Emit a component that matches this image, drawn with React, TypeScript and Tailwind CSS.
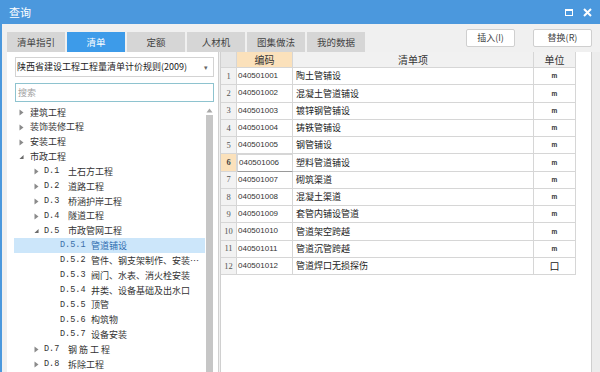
import React from "react";

const tabs = ["清单指引", "清单", "定额", "人材机", "图集做法", "我的数据"];

type TreeItem = {
  level: number;
  arrow: "none" | "right" | "down";
  code?: string;
  title: string;
  selected?: boolean;
};

const tree: TreeItem[] = [
  { level: 0, arrow: "right", title: "建筑工程" },
  { level: 0, arrow: "right", title: "装饰装修工程" },
  { level: 0, arrow: "right", title: "安装工程" },
  { level: 0, arrow: "down", title: "市政工程" },
  { level: 1, arrow: "right", code: "D.1", title: "土石方工程" },
  { level: 1, arrow: "right", code: "D.2", title: "道路工程" },
  { level: 1, arrow: "right", code: "D.3", title: "桥涵护岸工程" },
  { level: 1, arrow: "right", code: "D.4", title: "隧道工程" },
  { level: 1, arrow: "down", code: "D.5", title: "市政管网工程" },
  { level: 2, arrow: "none", code: "D.5.1", title: "管道铺设", selected: true },
  { level: 2, arrow: "none", code: "D.5.2", title: "管件、钢支架制作、安装…" },
  { level: 2, arrow: "none", code: "D.5.3", title: "阀门、水表、消火栓安装" },
  { level: 2, arrow: "none", code: "D.5.4", title: "井类、设备基础及出水口" },
  { level: 2, arrow: "none", code: "D.5.5", title: "顶管" },
  { level: 2, arrow: "none", code: "D.5.6", title: "构筑物" },
  { level: 2, arrow: "none", code: "D.5.7", title: "设备安装" },
  { level: 1, arrow: "right", code: "D.7", title: "钢 筋 工 程" },
  { level: 1, arrow: "right", code: "D.8", title: "拆除工程" },
];

const rows = [
  ["040501001", "陶土管铺设", "m"],
  ["040501002", "混凝土管道铺设", "m"],
  ["040501003", "镀锌钢管铺设", "m"],
  ["040501004", "铸铁管铺设", "m"],
  ["040501005", "钢管铺设", "m"],
  ["040501006", "塑料管道铺设", "m"],
  ["040501007", "砌筑渠道", "m"],
  ["040501008", "混凝土渠道", "m"],
  ["040501009", "套管内铺设管道", "m"],
  ["040501010", "管道架空跨越", "m"],
  ["040501011", "管道沉管跨越", "m"],
  ["040501012", "管道焊口无损探伤", "口"],
];

function Arrow({ kind }: { kind: "none" | "right" | "down" }) {
  if (kind === "right")
    return (
      <svg width="5" height="7" viewBox="0 0 5 7" className="block">
        <path d="M0.5 0.5 L4.5 3.5 L0.5 6.5 Z" fill="#8a8a8a" />
      </svg>
    );
  if (kind === "down")
    return (
      <svg width="6" height="6" viewBox="0 0 6 6" className="block">
        <path d="M5.5 0.5 L5.5 5.5 L0.5 5.5 Z" fill="#6a6a6a" />
      </svg>
    );
  return null;
}

function TreeRow({ item }: { item: TreeItem }) {
  const arrowLeft = item.level === 0 ? 5 : item.level === 1 ? 20 : 36;
  return (
    <div
      className={
        "h-[15px] flex items-center relative whitespace-nowrap " +
        (item.selected ? "bg-[#cce6fa]" : "")
      }
    >
      {item.level === 0 && (
        <>
          <span className="w-[5px] ml-[5px] flex items-center">
            <Arrow kind={item.arrow} />
          </span>
          <span className="ml-[6px] text-[9px] text-[#333]">{item.title}</span>
        </>
      )}
      {item.level === 1 && (
        <>
          <span className="w-[5px] ml-[20px] flex items-center">
            <Arrow kind={item.arrow} />
          </span>
          <span className="ml-[5px] w-[24px] font-['Liberation_Mono',monospace] text-[8.5px] text-[#333]">
            {item.code}
          </span>
          <span className="text-[9px] text-[#333]">{item.title}</span>
        </>
      )}
      {item.level === 2 && (
        <>
          <span
            className={
              "ml-[46px] w-[31px] font-['Liberation_Mono',monospace] text-[8.5px] " +
              (item.selected ? "text-[#3a6ea8]" : "text-[#333]")
            }
          >
            {item.code}
          </span>
          <span
            className={
              "text-[9px] " + (item.selected ? "text-[#2f6db0]" : "text-[#333]")
            }
          >
            {item.title}
          </span>
        </>
      )}
      <span className="hidden">{arrowLeft}</span>
    </div>
  );
}

export default function App() {
  return (
    <div className="w-[600px] h-[372px] overflow-hidden bg-[#f0f0f0] flex flex-col font-['Noto_Sans_CJK_SC',sans-serif] text-[#333]">
      {/* title bar */}
      <div className="h-[24px] shrink-0 bg-[#4b98dd] flex items-center pl-[9px] pr-[8px] text-white">
        <span className="text-[11px] leading-none">查询</span>
        <div className="ml-auto flex items-center gap-[10px]">
          <div className="w-[8px] h-[7px] border border-white border-t-[2px]" />
          <svg width="9" height="9" viewBox="0 0 9 9">
            <path d="M1 1 L8 8 M8 1 L1 8" stroke="white" strokeWidth="2" />
          </svg>
        </div>
      </div>

      <div className="flex-1 flex flex-col border-l-2 border-[#4b98dd] pl-[5px] min-h-0">
        {/* tab row */}
        <div className="h-[28px] shrink-0 flex items-end pr-[8px]">
          <div className="flex gap-[2px]">
            {tabs.map((t) => (
              <div
                key={t}
                className={
                  "w-[58px] h-[20px] flex items-center justify-center text-[9.5px] " +
                  (t === "清单"
                    ? "bg-[#3d9be9] text-white"
                    : "bg-[#d6d6d6] text-[#444]")
                }
              >
                {t}
              </div>
            ))}
          </div>
          <div className="ml-auto self-start mt-[5px] flex gap-[18px]">
            <div className="w-[49px] h-[18px] bg-white border border-[#cfcfcf] rounded-[2px] flex items-center justify-center text-[9px] text-[#444]">
              插入(I)
            </div>
            <div className="w-[59px] h-[18px] bg-white border border-[#cfcfcf] rounded-[2px] flex items-center justify-center text-[9px] text-[#444]">
              替换(R)
            </div>
          </div>
        </div>

        {/* main */}
        <div className="flex-1 flex min-h-0 gap-[1px]">
          {/* left panel */}
          <div className="w-[212px] shrink-0 bg-white border-r border-[#d0d0d0] flex flex-col pl-[8px] pr-[4px] min-h-0">
            <div className="mt-[5px] h-[20px] border border-[#d3d3d3] bg-white flex items-center pl-[1px] pr-[5px]">
              <span className="text-[9px] text-[#222] whitespace-nowrap">
                陕西省建设工程工程量清单计价规则(2009)
              </span>
              <span className="ml-auto text-[7px] text-[#666] leading-none">▾</span>
            </div>
            <div className="mt-[6px] h-[19px] border border-[#8ec3cf] bg-white flex items-center pl-[2px]">
              <span className="text-[9px] text-[#a0a0a0]">搜索</span>
            </div>
            <div className="mt-[3px] flex flex-1 min-h-0">
              <div className="flex-1 flex flex-col -ml-[1px]">
                {tree.map((item, i) => (
                  <TreeRow key={i} item={item} />
                ))}
              </div>
              <div className="w-[9px] shrink-0 flex flex-col items-center">
                <svg width="7" height="5" viewBox="0 0 7 5" className="mt-[3px]">
                  <path d="M0.5 4.5 L3.5 0.5 L6.5 4.5 Z" fill="#a8a8a8" />
                </svg>
                <div className="mt-[2px] w-[7px] flex-1 bg-[#c6c6c6]" />
              </div>
            </div>
          </div>

          {/* table */}
          <div className="flex-1 flex min-h-0">
            <div className="w-[372px] bg-white border-l border-[#d0d0d0] border-r border-r-[#cfcfcf] flex flex-col">
              <div className="flex h-[16px] shrink-0 text-[10px]">
                <div className="w-[16px] bg-[#e6e6e6] border-r border-b border-[#d6d6d6]" />
                <div className="w-[56px] bg-[#fbe1bb] border-r border-b border-[#d6d6d6] flex items-center justify-center text-[#333]">
                  编码
                </div>
                <div className="w-[241px] bg-[#f1f1f1] border-r border-b border-[#d6d6d6] flex items-center justify-center text-[#333]">
                  清单项
                </div>
                <div className="w-[42px] bg-[#f1f1f1] border-r border-b border-[#d6d6d6] flex items-center justify-center text-[#333]">
                  单位
                </div>
              </div>
              {rows.map((r, i) => {
                const sel = i === 5;
                return (
                  <div key={i} className="flex h-[17.25px] shrink-0">
                    <div
                      className={
                        "w-[16px] border-r border-b border-[#d6d6d6] flex items-center justify-center font-['Liberation_Serif',serif] text-[8.5px] " +
                        (sel
                          ? "bg-[#fbe1bb] font-bold text-[#444]"
                          : "bg-[#f2f2f2] text-[#555]")
                      }
                    >
                      {i + 1}
                    </div>
                    <div
                      className={
                        "w-[56px] border-b border-[#d6d6d6] flex items-center pl-[1px] font-['Liberation_Sans',sans-serif] text-[8px] text-[#333] " +
                        (sel
                          ? "border border-[#9a9a9a] border-b-[#9a9a9a]"
                          : "border-r")
                      }
                    >
                      {r[0]}
                    </div>
                    <div className="w-[241px] border-r border-b border-[#d6d6d6] flex items-center pl-[3px] text-[9px] text-[#222]">
                      {r[1]}
                    </div>
                    <div className="w-[42px] border-r border-b border-[#d6d6d6] flex items-center justify-center">
                      {r[2] === "m" ? (
                        <span className="font-['Liberation_Sans',sans-serif] font-bold text-[6.5px] text-[#333]">
                          m
                        </span>
                      ) : (
                        <span className="text-[10px] text-[#222]">{r[2]}</span>
                      )}
                    </div>
                  </div>
                );
              })}
            </div>
            <div className="flex-1 bg-[#ececec]" />
          </div>
        </div>
      </div>
    </div>
  );
}
